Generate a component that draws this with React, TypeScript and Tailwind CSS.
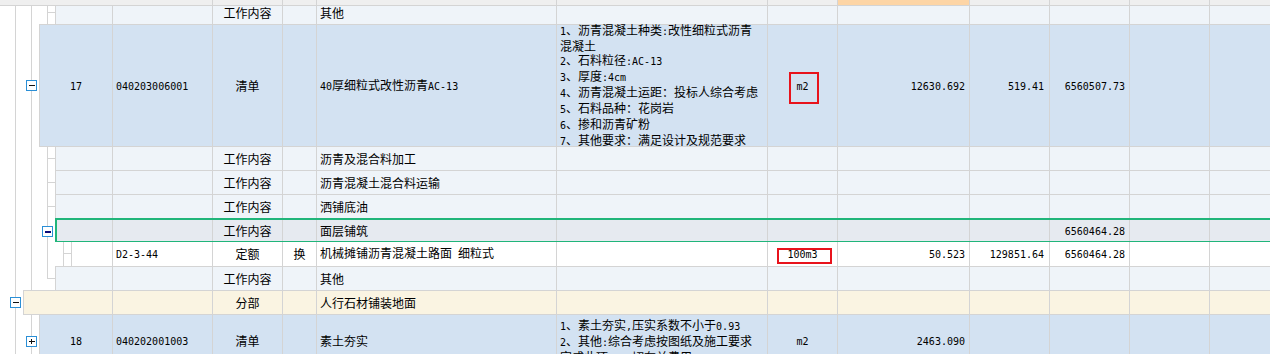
import React from "react";

const LINE = "#d4d4d4";

type TreeDef = {
  full: number[];
  toMid?: number[];
  branch?: [number, number];
  top?: [number, number];
  mid?: number;
  icon?: { x: number; y: number; kind: "minus" | "plus"; bold?: boolean };
};

type RowDef = {
  hp: number;
  h: string;
  indent: number;
  c0w: string;
  box: string;
  cellPad?: string;
  tree: TreeDef;
  cells: React.ReactNode[];
};

// mixed text: ascii runs in a narrow mono face, the rest in CJK
function Txt({ s }: { s: string }) {
  const parts = s.match(/[\x20-\x7e]+|[^\x20-\x7e]+/g) ?? [];
  return (
    <span className="whitespace-pre">
      {parts.map((p, i) =>
        /^[\x20-\x7e]+$/.test(p) ? (
          <span key={i} className="font-['DejaVu_Sans_Mono',monospace] text-[10px]">
            {p}
          </span>
        ) : (
          <span key={i}>{p}</span>
        )
      )}
    </span>
  );
}

function TreeArt({ w, h, t }: { w: number; h: number; t: TreeDef }) {
  const mid = t.mid ?? 12;
  return (
    <svg width={w} height={h} className="block shrink-0" shapeRendering="crispEdges">
      {t.full.map((x) => (
        <line key={"f" + x} x1={x + 0.5} y1={0} x2={x + 0.5} y2={h} stroke={LINE} />
      ))}
      {(t.toMid ?? []).map((x) => (
        <line key={"m" + x} x1={x + 0.5} y1={0} x2={x + 0.5} y2={mid + 1} stroke={LINE} />
      ))}
      {t.branch && (
        <line x1={t.branch[0]} y1={mid + 0.5} x2={t.branch[1]} y2={mid + 0.5} stroke={LINE} />
      )}
      {t.top && <line x1={t.top[0]} y1={0.5} x2={t.top[1]} y2={0.5} stroke={LINE} />}
      {t.icon && (
        <g>
          <rect x={t.icon.x + 0.5} y={t.icon.y + 0.5} width={10} height={10} fill="#fff" stroke="#2b8fd6" />
          <rect
            x={t.icon.x + 3}
            y={t.icon.y + 5}
            width={6}
            height={t.icon.bold ? 2 : 1}
            fill={t.icon.bold ? "#0a0a78" : "#111"}
          />
          {t.icon.kind === "plus" && (
            <rect x={t.icon.x + 5} y={t.icon.y + 3} width={1} height={5} fill="#111" />
          )}
        </g>
      )}
    </svg>
  );
}

const WIDTHS = ["w-[100px]", "w-[70px]", "w-[34px]", "w-[240px]", "w-[211px]", "w-[70px]", "w-[132px]", "w-[80px]", "w-[80px]", "w-[80px]"];
const ALIGN = [
  "justify-center",
  "justify-start pl-[3px]",
  "justify-center",
  "justify-center",
  "justify-start pl-[3px]",
  "justify-start pl-[3px]",
  "justify-center",
  "justify-end pr-[4px]",
  "justify-end pr-[5px]",
  "justify-end pr-[4px]",
  "justify-start",
  "justify-start",
];

const Lines = ({ items }: { items: string[] }) => (
  <div className="flex flex-col leading-[14px]">
    {items.map((l) => (
      <div key={l} className="whitespace-nowrap">
        <Txt s={l} />
      </div>
    ))}
  </div>
);

const gridBox = "border-l border-t border-[#d4d4d4]";

const rows: RowDef[] = [
  {
    hp: 18,
    h: "h-[18px]",
    indent: 55,
    c0w: "w-[57px]",
    box: "border-l border-[#d4d4d4] bg-[#eff4f9]",
    cellPad: "pb-[4px]",
    tree: { full: [15, 31, 47], branch: [47, 55], mid: 6 },
    cells: ["", "", "工作内容", "", "其他"],
  },
  {
    hp: 122,
    h: "h-[122px]",
    indent: 39,
    c0w: "w-[73px]",
    box: gridBox + " bg-[#d3e2f2]",
    tree: { full: [15, 31], icon: { x: 26, y: 56, kind: "minus" } },
    cells: [
      "17",
      "040203006001",
      "清单",
      "",
      "40厚细粒式改性沥青AC-13",
      <Lines
        items={[
          "1、沥青混凝土种类:改性细粒式沥青",
          "混凝土",
          "2、石料粒径:AC-13",
          "3、厚度:4cm",
          "4、沥青混凝土运距：投标人综合考虑",
          "5、石料品种：花岗岩",
          "6、掺和沥青矿粉",
          "7、其他要求：满足设计及规范要求",
        ]}
      />,
      <>
        <Txt s="m2" />
        <span className="pointer-events-none absolute left-[21px] top-[47px] h-[32px] w-[30px] border-2 border-[#e8131c]" />
      </>,
      "12630.692",
      "519.41",
      "6560507.73",
    ],
  },
  {
    hp: 24,
    h: "h-6",
    indent: 55,
    c0w: "w-[57px]",
    box: gridBox + " bg-[#eff4f9]",
    tree: { full: [15, 31, 47], branch: [47, 55], top: [39, 55] },
    cells: ["", "", "工作内容", "", "沥青及混合料加工"],
  },
  {
    hp: 24,
    h: "h-6",
    indent: 55,
    c0w: "w-[57px]",
    box: gridBox + " bg-[#eff4f9]",
    tree: { full: [15, 31, 47], branch: [47, 55] },
    cells: ["", "", "工作内容", "", "沥青混凝土混合料运输"],
  },
  {
    hp: 24,
    h: "h-6",
    indent: 55,
    c0w: "w-[57px]",
    box: gridBox + " bg-[#eff4f9]",
    tree: { full: [15, 31, 47], branch: [47, 55] },
    cells: ["", "", "工作内容", "", "洒铺底油"],
  },
  {
    hp: 24,
    h: "h-6",
    indent: 55,
    c0w: "w-[56px]",
    box: "border-l-2 border-t-2 border-b border-[#20b57a] bg-[#e6eaf0]",
    tree: { full: [15, 31, 47], icon: { x: 42, y: 8, kind: "minus", bold: true } },
    cells: ["", "", "工作内容", "", "面层铺筑", "", "", "", "", "6560464.28"],
  },
  {
    hp: 24,
    h: "h-6",
    indent: 71,
    c0w: "w-[41px]",
    box: "border-l border-[#d4d4d4] bg-white",
    tree: { full: [15, 31, 47, 63], branch: [63, 71], mid: 11 },
    cells: [
      "",
      "D2-3-44",
      "定额",
      "换",
      "机械摊铺沥青混凝土路面 细粒式",
      "",
      <>
        <Txt s="100m3" />
        <span className="pointer-events-none absolute left-[9px] top-[6px] h-[16px] w-[55px] border-2 border-[#e8131c]" />
      </>,
      "50.523",
      "129851.64",
      "6560464.28",
    ],
  },
  {
    hp: 24,
    h: "h-6",
    indent: 55,
    c0w: "w-[57px]",
    box: gridBox + " bg-[#eff4f9]",
    tree: { full: [15, 31], toMid: [47], branch: [47, 55] },
    cells: ["", "", "工作内容", "", "其他"],
  },
  {
    hp: 24,
    h: "h-6",
    indent: 23,
    c0w: "w-[89px]",
    box: gridBox + " bg-[#faf4e2]",
    tree: { full: [15], icon: { x: 10, y: 7, kind: "minus" } },
    cells: ["", "", "分部", "", "人行石材铺装地面"],
  },
  {
    hp: 52,
    h: "h-[52px]",
    indent: 39,
    c0w: "w-[73px]",
    box: gridBox + " bg-[#d3e2f2]",
    tree: { full: [15, 31], top: [23, 39], icon: { x: 26, y: 22, kind: "plus" } },
    cells: [
      "18",
      "040202001003",
      "清单",
      "",
      "素土夯实",
      <Lines
        items={["1、素土夯实,压实系数不小于0.93", "2、其他:综合考虑按图纸及施工要求", "完成此项，一切有关费用"]}
      />,
      "m2",
      "2463.090",
    ],
  },
];

function GridRow({ r }: { r: RowDef }) {
  const cells = Array.from({ length: 12 }, (_, i) => r.cells[i] ?? "");
  return (
    <div className={"flex shrink-0 " + r.h}>
      <TreeArt w={r.indent} h={r.hp} t={r.tree} />
      <div className={"flex min-w-0 flex-1 " + r.box}>
        {cells.map((c, i) => (
          <div
            key={i}
            className={[
              "relative flex h-full shrink-0 items-center overflow-visible whitespace-nowrap",
              i === 0 ? r.c0w : i === 11 ? "flex-1" : WIDTHS[i - 1],
              i < 11 ? "border-r border-[#d4d4d4]" : "",
              ALIGN[i],
              r.cellPad ?? "",
            ].join(" ")}
          >
            {typeof c === "string" ? <Txt s={c} /> : c}
          </div>
        ))}
      </div>
    </div>
  );
}

export default function App() {
  const headCols = ["w-[113px]", ...WIDTHS];
  return (
    <div className="flex h-[354px] w-[1270px] flex-col overflow-hidden bg-white font-['Noto_Sans_CJK_SC',sans-serif] text-[12px] leading-[14px] text-black">
      <div className="flex h-[6px] shrink-0 border-b border-[#d4d4d4] bg-[#efefef]">
        {headCols.map((w, i) => (
          <div
            key={i}
            className={
              "h-full shrink-0 " +
              w +
              (i === 0 ? "" : " border-r border-[#d4d4d4]") +
              (i === 7 ? " bg-[#fdd5a6]" : "")
            }
          />
        ))}
        <div className="flex-1" />
      </div>
      {rows.map((r, i) => (
        <GridRow key={i} r={r} />
      ))}
    </div>
  );
}
